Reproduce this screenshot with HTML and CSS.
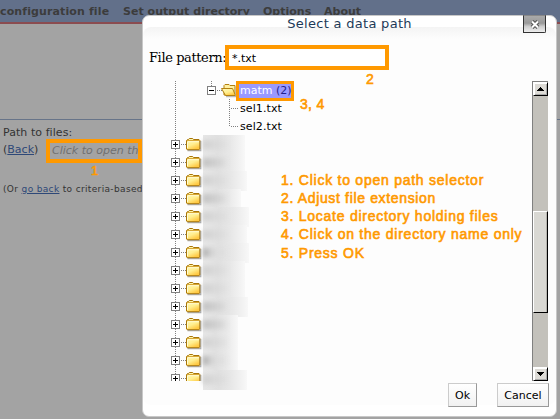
FILE: styles.css
```css
* { box-sizing: border-box; }
body { margin: 0; font-family: "DejaVu Sans", sans-serif; }
p { margin: 0; }
svg { display: block; flex: none; }
.defs { position: absolute; }
.screen { position: relative; width: 560px; height: 419px; overflow: hidden; background: #a3a3a3; white-space: nowrap; }

.menu { display: flex; height: 24px; background: #62708a; border-bottom: 2px solid #8b4c50; color: #3c3c3c; font: bold 11px/23px "DejaVu Sans", sans-serif; }
.m1 { width: 123px; letter-spacing: 0.12px; }
.m2 { width: 140px; letter-spacing: 0.03px; }
.m3 { width: 61px; }

.page { margin-top: 95px; border-top: 1px solid #677489; padding: 5px 0 0 3px; color: #333; font-size: 11px; }
.page a { color: #2e4878; text-decoration: underline; }
.label { line-height: 15px; letter-spacing: 0.06px; }
.picker { display: flex; align-items: center; height: 24px; margin-top: -1px; }
.picker > span:first-child { width: 43px; font-size: 11px; margin-top: -3px; }
.field { width: 96px; height: 24px; border: 4px solid #ff9900; padding-left: 2px; line-height: 15px; font-style: italic; color: #707070; overflow: hidden; }
.alt { margin-top: 19px; font-size: 9px; line-height: 15px; letter-spacing: 0.35px; }

.dialog { position: absolute; left: 142px; top: 15px; width: 415px; height: 402px; border: 1px solid #c8c8c8; border-radius: 7px; background: #fff; }
.title { height: 11px; display: flex; justify-content: center; color: #1d3a58; font-size: 13px; line-height: 15px; letter-spacing: 0.3px; }
.body { height: 378px; border-radius: 8px; padding: 18px 7px 0 6px; background: linear-gradient(#f4f4f4, #fdfdfd 12px); }
.pattern { display: flex; height: 25px; align-items: center; font: 13px "DejaVu Serif", serif; color: #000; }
.pattern label { width: 76px; letter-spacing: -0.4px; }
.input { width: 164px; height: 25px; border: 4px solid #ff9900; background: #fff; padding-left: 3px; font: 11px/19px "DejaVu Sans", sans-serif; }

.pane { display: flex; justify-content: space-between; height: 300px; margin-top: 11px; }
.tree { padding-left: 22px; }
.row { display: flex; height: 18px; font-size: 11px; line-height: 20px; letter-spacing: 0.1px; }
.chosen { width: 58px; height: 20px; margin-left: -5px; border: 3px solid #ff9900; background: #9999ff; padding-left: 1px; color: #fff; line-height: 14px; letter-spacing: 0; }
.chosen b { color: #22228c; font-weight: normal; }
.cut { height: 12px; overflow: hidden; }
.smudge { height: 20px; background: linear-gradient(90deg, #e6e6e6, #e0e0e0 35%, #e8e8e8 65%, #f3f3f3 90%, #f8f8f8); position: relative; }
.smudge::after { content: ""; position: absolute; left: 0; top: 5px; width: 26px; height: 9px; background: linear-gradient(90deg, #d0d0d0, #d8d8d8 40%, transparent); filter: blur(2px); }
.mid::after { background: linear-gradient(90deg, #c2c2c2, #d0d0d0 50%, transparent); }
.dark::after { background: linear-gradient(90deg, #aaa, #ccc 25%, #ddd 50%, transparent); }
.w35 { width: 35px; }
.w38 { width: 38px; }
.w42 { width: 42px; }
.w44 { width: 44px; }
.w45 { width: 45px; }
.w46 { width: 46px; }
.last .smudge { margin-top: 1px; }

.scroll { display: flex; flex-direction: column; justify-content: space-between; width: 16px; height: 300px; margin-right: 1px; border-left: 1px solid #808080; border-top: 1px solid #808080; background: #c3c1bb; }
.arrow { display: flex; align-items: center; justify-content: center; height: 14px; background: #dddbd6; border: 1px solid #fff; border-right-color: #000; border-bottom-color: #000; box-shadow: inset 1px 1px #fff, inset -1px -1px #aaa; }
.thumb { height: 102px; margin-top: 61px; background: #d9d8d3; border: 1px solid #fff; border-right-color: #000; border-bottom-color: #000; box-shadow: inset -1px 0 #b5b3ad; }

.buttons { display: flex; justify-content: flex-end; gap: 20px; margin-top: 2px; }
.btn { height: 24px; background: linear-gradient(#fff, #f1f1f1); border: 1px solid #ccc; border-right: 1px solid #999; border-bottom: 1px solid #999; font-size: 11px; line-height: 23px; text-align: center; color: #000; }
.ok { width: 29px; }
.cancel { width: 52px; }
.close { position: absolute; right: 10px; top: -1px; width: 23px; height: 18px; display: flex; align-items: center; justify-content: center; border: 1px solid #333; border-top-color: #888; border-radius: 0 0 2px 0; background: linear-gradient(#aaa, #999 45%, #ccc 65%, #eee); }

.note { position: absolute; color: #ff9900; font: 13px/18px "Liberation Sans", sans-serif; -webkit-text-stroke: 0.6px #ff9900; }
.n1 { left: 91px; top: 162px; }
.n2 { left: 366px; top: 70px; font-size: 14px; }
.n3 { left: 300px; top: 95px; font-size: 14px; letter-spacing: 0.3px; }
.steps { left: 281px; top: 171px; font-size: 14px; }
.s1 { letter-spacing: 0.75px; }
.s2 { letter-spacing: 0.65px; }
.s3 { letter-spacing: 0.74px; }
.s4 { letter-spacing: 0.76px; }
.s5 { letter-spacing: 0.75px; line-height: 20px; }
```

FILE: index.html
```html
<!DOCTYPE html>
<html lang="en">
<head>
<meta charset="utf-8">
<title>Select a data path</title>
<link rel="stylesheet" href="styles.css">
</head>
<body>
<svg class="defs" width="0" height="0">
  <defs>
    <linearGradient id="gold" x1="0" y1="0" x2=".5" y2="1"><stop offset="0" stop-color="#fff9b8"/><stop offset=".6" stop-color="#ffef91"/><stop offset="1" stop-color="#ffc943"/></linearGradient>
    <symbol id="node" viewBox="0 0 32 18">
      <path d="M4.5 0v18" stroke="#808080" stroke-dasharray="1 1"/>
      <path d="M10 9.5h5" stroke="#808080" stroke-dasharray="1 1"/>
      <rect x=".5" y="5.5" width="8" height="8" fill="#fff" stroke="#808080"/>
      <path d="M2 9.5h5M4.5 7v5" stroke="#000"/>
      <path d="M16.5 15.7H29.7V6" fill="none" stroke="#aaa" stroke-width="1.3"/>
      <path d="M15.5 14V5.5l1-1h1l.8-1h3.4l.8 1h5.5l.8.8V14l-.8.7H16.2z" fill="url(#gold)" stroke="#a87508"/>
      <path d="M16 5.6h12.5" stroke="#d4a12b"/>
      <path d="M16.5 7v6M17 6.7h11" stroke="#fffbd2" fill="none"/>
    </symbol>
  </defs>
</svg>
<div class="screen">
  <nav class="menu"><span class="m1">configuration file</span><span class="m2">Set output directory</span><span class="m3">Options</span><span class="m4">About</span></nav>
  <main class="page">
    <p class="label">Path to files:</p>
    <div class="picker"><span>(<a>Back</a>)</span><span class="field">Click to open th</span></div>
    <p class="alt">(Or <a>go back</a> to criteria-based</p>
  </main>

  <section class="dialog">
    <header class="title"><span>Select a data path</span></header>
    <div class="body">
      <div class="pattern"><label>File pattern:</label><span class="input">*.txt</span></div>
      <div class="pane">
        <div class="tree">
          <div class="row">
            <svg width="70" height="18" viewBox="0 0 70 18">
              <path d="M4.5 0v18M40.5 0v5M46 9.5h5" stroke="#808080" stroke-dasharray="1 1"/>
              <rect x="36.5" y="5.5" width="8" height="8" fill="#fff" stroke="#808080"/>
              <path d="M38 9.5h5" stroke="#000"/>
              <path d="M53 14V4.5l1-1h4l1 1h5v10z" fill="#fff0a0" stroke="#b38112"/>
              <path d="M54.5 14.5L50.5 7.5H61.5l3 7z" fill="url(#gold)" stroke="#b38112"/>
              <path d="M55 15.7h10V6" fill="none" stroke="#aaa"/>
            </svg><span class="chosen">matm <b>(2)</b></span>
          </div>
          <div class="row"><svg width="69" height="18"><path d="M4.5 0v18M58.5 0v18M60 9.5h7" stroke="#808080" stroke-dasharray="1 1"/></svg><span>sel1.txt</span></div>
          <div class="row"><svg width="69" height="18"><path d="M4.5 0v18M58.5 0v9M60 9.5h7" stroke="#808080" stroke-dasharray="1 1"/></svg><span>sel2.txt</span></div>
          <div class="row"><svg width="32" height="18"><use href="#node"/></svg><i class="smudge w42"></i></div>
          <div class="row"><svg width="32" height="18"><use href="#node"/></svg><i class="smudge w42 mid"></i></div>
          <div class="row"><svg width="32" height="18"><use href="#node"/></svg><i class="smudge w44"></i></div>
          <div class="row"><svg width="32" height="18"><use href="#node"/></svg><i class="smudge w38 mid"></i></div>
          <div class="row"><svg width="32" height="18"><use href="#node"/></svg><i class="smudge w46"></i></div>
          <div class="row"><svg width="32" height="18"><use href="#node"/></svg><i class="smudge w44"></i></div>
          <div class="row"><svg width="32" height="18"><use href="#node"/></svg><i class="smudge w46 dark"></i></div>
          <div class="row"><svg width="32" height="18"><use href="#node"/></svg><i class="smudge w42"></i></div>
          <div class="row"><svg width="32" height="18"><use href="#node"/></svg><i class="smudge w42"></i></div>
          <div class="row"><svg width="32" height="18"><use href="#node"/></svg><i class="smudge w45 mid"></i></div>
          <div class="row"><svg width="32" height="18"><use href="#node"/></svg><i class="smudge w35 mid"></i></div>
          <div class="row"><svg width="32" height="18"><use href="#node"/></svg><i class="smudge w35"></i></div>
          <div class="row"><svg width="32" height="18"><use href="#node"/></svg><i class="smudge w35 dark"></i></div>
          <div class="row last"><span class="cut"><svg width="32" height="18"><use href="#node"/></svg></span><i class="smudge w44"></i></div>
        </div>
        <div class="scroll">
          <span class="arrow"><svg width="7" height="4"><path d="M0 4V3h1V2h1V1h1V0h1v1h1v1h1v1h1v1z"/></svg></span>
          <span class="thumb"></span>
          <span class="arrow"><svg width="7" height="4"><path d="M0 0v1h1v1h1v1h1v1h1V3h1V2h1V1h1V0z"/></svg></span>
        </div>
      </div>
      <footer class="buttons"><span class="btn ok">Ok</span><span class="btn cancel">Cancel</span></footer>
    </div>
    <span class="close"><svg width="10" height="9" viewBox="0 0 10 9"><path d="M2 1.5l6 6M8 1.5l-6 6" stroke="#555" stroke-width="4"/><path d="M2 1.5l6 6M8 1.5l-6 6" stroke="#fff" stroke-width="2"/></svg></span>
  </section>

  <span class="note n1">1</span>
  <span class="note n2">2</span>
  <span class="note n3">3, 4</span>
  <div class="note steps">
    <div class="s1">1. Click to open path selector</div>
    <div class="s2">2. Adjust file extension</div>
    <div class="s3">3. Locate directory holding files</div>
    <div class="s4">4. Click on the directory name only</div>
    <div class="s5">5. Press OK</div>
  </div>
</div>
</body>
</html>
```
